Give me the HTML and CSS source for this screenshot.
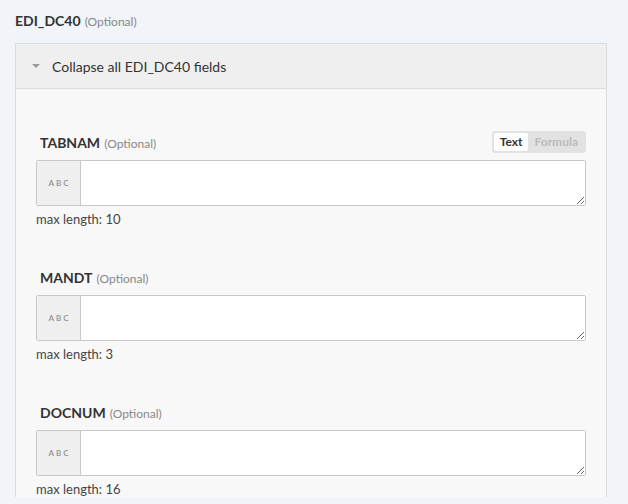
FILE: index.html
```html
<!DOCTYPE html>
<html>
<head>
<meta charset="utf-8">
<link rel="stylesheet" href="styles.css">
</head>
<body>
<div class="title"><span class="name">EDI_DC40</span> <span class="opt">(Optional)</span></div>
<div class="group">
  <div class="group-head"><span class="caret"></span><span class="head-text">Collapse all EDI_DC40 fields</span></div>
  <div class="group-body">
    <div class="field">
      <div class="label-row">
        <div class="label"><span class="fname">TABNAM</span> <span class="opt">(Optional)</span></div>
        <div class="toggle"><span class="tg on">Text</span><span class="tg">Formula</span></div>
      </div>
      <div class="input"><div class="abc">ABC</div><textarea class="ta"></textarea></div>
      <div class="hint">max length: 10</div>
    </div>
    <div class="field">
      <div class="label-row">
        <div class="label"><span class="fname">MANDT</span> <span class="opt">(Optional)</span></div>
      </div>
      <div class="input"><div class="abc">ABC</div><textarea class="ta"></textarea></div>
      <div class="hint">max length: 3</div>
    </div>
    <div class="field">
      <div class="label-row">
        <div class="label"><span class="fname">DOCNUM</span> <span class="opt">(Optional)</span></div>
      </div>
      <div class="input"><div class="abc">ABC</div><textarea class="ta"></textarea></div>
      <div class="hint">max length: 16</div>
    </div>
  </div>
</div>
</body>
</html>
```
FILE: styles.css
```css
html, body { margin: 0; padding: 0; }
body {
  background: #f1f4f8;
  font-family: Lato, "Open Sans", sans-serif;
  color: #333;
  height: 504px;
  overflow: hidden;
}
.title {
  padding: 11px 0 0 15px;
  height: 43px;
  box-sizing: border-box;
  line-height: 17px;
}
.name { font-weight: bold; font-size: 14px; color: #333; }
.opt { font-size: 12px; color: #888; }
.group {
  margin: 0 21px 0 15px;
  border: 1px solid #dcdcdc;
  border-bottom: none;
  background: #f8f8f8;
}
.group-head {
  height: 44px;
  background: #efefef;
  border-bottom: 1px solid #dcdcdc;
  display: flex;
  align-items: center;
  padding-left: 16px;
}
.caret {
  width: 0; height: 0;
  border-left: 4px solid transparent;
  border-right: 4px solid transparent;
  border-top: 4px solid #999;
  margin-right: 12px;
}
.head-text { font-size: 14px; color: #333; }
.group-body { padding: 42px 20px 0 20px; }
.field { margin-bottom: 39px; }
.field:last-child { margin-bottom: 0; }
.label-row {
  height: 22px;
  display: flex;
  align-items: center;
  justify-content: space-between;
  margin-bottom: 7px;
}
.label { padding-left: 4px; line-height: 17px; }
.fname { font-weight: bold; font-size: 14px; color: #333; }
.toggle {
  background: #e2e2e2;
  border-radius: 3px;
  padding: 2px;
  display: flex;
  height: 22px;
  box-sizing: border-box;
}
.tg {
  font-size: 12px;
  font-weight: bold;
  color: #bbb;
  padding: 0 6px;
  line-height: 18px;
  border-radius: 2px;
}
.tg.on { background: #fff; color: #333; }
.input {
  display: flex;
  height: 46px;
  box-sizing: border-box;
  border: 1px solid #c8c8c8;
  border-radius: 2px;
  background: #fff;
}
.abc {
  width: 44px;
  background: #efefef;
  border-right: 1px solid #c8c8c8;
  font-size: 8px;
  font-weight: bold;
  letter-spacing: 2px;
  color: #999;
  display: flex;
  align-items: center;
  justify-content: center;
  padding-left: 2px;
  box-sizing: border-box;
}
.ta {
  flex: 1;
  border: none;
  margin: 0;
  padding: 0;
  outline: none;
  background: #fff;
  resize: vertical;
  height: 44px;
  font-family: Lato, sans-serif;
}
.hint {
  margin-top: 5px;
  font-size: 13px;
  line-height: 16px;
  color: #444;
}
```
